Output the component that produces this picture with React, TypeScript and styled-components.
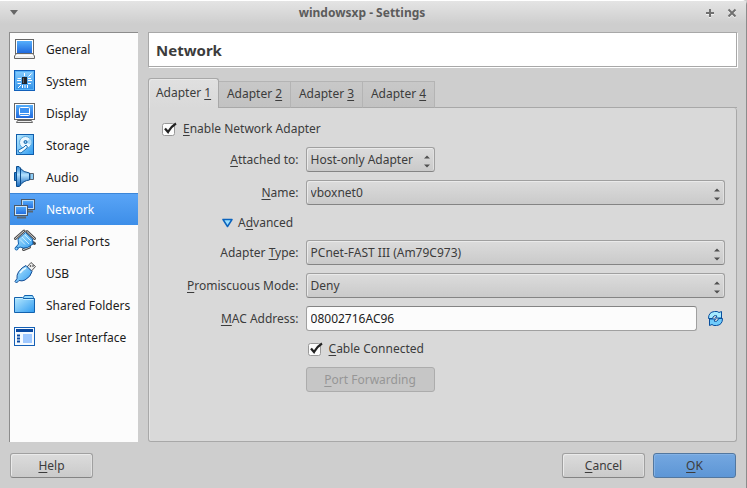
import React from "react";
import styled, { createGlobalStyle, css } from "styled-components";

const GlobalStyle = createGlobalStyle`
  * { box-sizing: border-box; }
  body { margin: 0; background: #cecece; }
  body, button, input, select {
    font-family: "Noto Sans", "Open Sans", sans-serif;
    font-size: 12px;
    color: #3c3c3c;
  }
`;

const Window = styled.div`
  min-height: 100vh;
  display: flex;
  flex-direction: column;
  background: #cecece;
  border-top: 1px solid #fff;
  border-right: 1px solid #8c8c8c;
  border-top-right-radius: 5px;
`;

const TitleBar = styled.header`
  height: 23px;
  flex: none;
  display: grid;
  grid-template-columns: 32px 1fr 54px;
  align-items: center;
  padding: 0 9px;
  background: linear-gradient(#e4e4e4, #cecece);
`;

const Title = styled.h1`
  margin: 0;
  font-size: 12px;
  line-height: 16px;
  font-weight: 700;
  text-align: center;
  color: #5c5c5c;
`;

const TitleActions = styled.div`
  display: flex;
  justify-content: flex-end;
  gap: 12px;
`;

const IconButton = styled.button`
  display: flex;
  padding: 0;
  border: 0;
  background: none;
  svg { display: block; }
`;

const Body = styled.div`
  flex: 1;
  display: grid;
  grid-template-columns: 129px minmax(0, 1fr);
  gap: 10px;
  padding: 8px 9px 0;
`;

const Sidebar = styled.nav`
  background: #fcfcfc;
  border-top: 1px solid #8c8c8c;
  border-left: 1px solid #8c8c8c;
`;

const SideItem = styled.a<{ $active?: boolean }>`
  height: 32px;
  display: flex;
  align-items: center;
  gap: 9px;
  padding-left: 3px;
  color: ${(p) => (p.$active ? "#fff" : "#1c1c1c")};
  text-decoration: none;
  background: ${(p) => (p.$active ? "linear-gradient(#5aa5f7, #3d8ee8)" : "none")};
  box-shadow: ${(p) => (p.$active ? "inset 0 1px 0 #3c86d8" : "none")};
`;

const Main = styled.main`
  display: flex;
  flex-direction: column;
  min-width: 0;
`;

const PageHeading = styled.h2`
  margin: 0 0 11px;
  height: 35px;
  padding: 0 7px;
  font-size: 15px;
  line-height: 34px;
  font-weight: 700;
  color: #3c3c3c;
  background: #fff;
  border: 1px solid #a8a8a8;
  box-shadow: 1px 1px 0 #fff;
`;

const TabBar = styled.div`
  display: flex;
  align-items: flex-end;
  height: 30px;
`;

const Tab = styled.button<{ $active?: boolean }>`
  height: 27px;
  width: 72px;
  padding: 0 0 2px;
  border: 1px solid #b4b4b4;
  border-left-width: 0;
  border-bottom-color: #a8a8a8;
  background: linear-gradient(#c8c8c8, #c2c2c2);
  &:last-child { border-top-right-radius: 3px; }
  ${(p) =>
    p.$active &&
    css`
      height: 30px;
      width: 71px;
      border: 1px solid #a8a8a8;
      border-bottom: 0;
      border-radius: 3px 3px 0 0;
      background: linear-gradient(#e0e0e0, #d9d9d9);
      box-shadow: inset 1px 1px 0 #e8e8e8;
    `}
`;

const Panel = styled.section`
  flex: 1;
  padding: 11px 11px 12px 13px;
  background: #d9d9d9;
  border: 1px solid #a8a8a8;
  border-top: 0;
  border-radius: 0 3px 3px 3px;
  box-shadow: inset 1px 0 0 #e4e4e4;
`;

const TabFill = styled.div`
  flex: 1;
  border-bottom: 1px solid #a8a8a8;
`;

const CheckLabel = styled.label`
  display: flex;
  align-items: center;
  gap: 6px;
  height: 18px;
`;

const CheckBox = styled.input`
  appearance: none;
  width: 15px;
  height: 15px;
  margin: 0;
  background: url("data:image/svg+xml,%3Csvg xmlns='http://www.w3.org/2000/svg' width='15' height='15'%3E%3Crect x='.5' y='2.5' width='12' height='12' rx='2' fill='%23fcfcfc' stroke='%23999'/%3E%3Cpath d='M3 7.5 6 11Q9 5.500 14 2.500' fill='none' stroke='%23222' stroke-width='2.300'/%3E%3C/svg%3E");
`;

const Form = styled.div`
  display: grid;
  grid-template-columns: max-content minmax(0, 1fr);
  column-gap: 7px;
  row-gap: 8px;
  align-items: center;
  margin-top: 10px;
  padding-left: 25px;
`;

const FieldLabel = styled.label`
  text-align: right;
`;

const SelectBox = styled.div<{ $compact?: boolean }>`
  position: relative;
  width: ${(p) => (p.$compact ? "129px" : "100%")};
  svg {
    position: absolute;
    right: 5px;
    top: 8px;
    pointer-events: none;
  }
`;

const raised = css`
  height: 25px;
  border: 1px solid #a0a0a0;
  border-bottom-color: #848484;
  border-radius: 3px;
  background: linear-gradient(#dcdcdc, #cacaca);
  box-shadow: inset 1px 1px 0 #eaeaea, inset -1px 0 0 #e0e0e0;
`;

const Select = styled.select`
  ${raised}
  appearance: none;
  display: block;
  width: 100%;
  padding: 0 18px 0 4px;
`;

const MacRow = styled.div`
  display: flex;
  align-items: center;
  gap: 10px;
  padding-right: 1px;
`;

const TextInput = styled.input`
  flex: 1;
  min-width: 0;
  height: 25px;
  padding: 0 4px;
  color: #1c1c1c;
  background: #fcfcfc;
  border: 1px solid #a0a0a0;
  border-top-color: #848484;
  border-radius: 3px;
`;

const Advanced = styled.button`
  grid-column: 1 / -1;
  justify-self: start;
  display: flex;
  align-items: center;
  gap: 5px;
  height: 19px;
  margin-left: 35px;
  padding: 0;
  border: 0;
  background: none;
`;

const CableRow = styled.div`
  grid-column: 2;
  padding: 0 2px 2px;
`;

const PushButton = styled.button<{ $primary?: boolean }>`
  ${raised}
  width: 83px;
  padding: 0;
  ${(p) =>
    p.$primary &&
    css`
      border-color: #52779f;
      background: linear-gradient(#74a7e0, #5d96d6);
      box-shadow: inset 1px 1px 0 #83b1e5;
    `}
  &:disabled {
    color: #969696;
    background: #c6c6c6;
    border-color: #acacac;
    box-shadow: none;
  }
`;

const ForwardingButton = styled(PushButton)`
  grid-column: 2;
  width: 129px;
`;

const Footer = styled.footer`
  display: flex;
  gap: 8px;
  padding: 11px 10px 10px;
`;

const Spacer = styled.div`
  flex: 1;
`;

const Key = styled.span`
  text-decoration: underline;
  text-decoration-thickness: 1px;
  text-underline-offset: 2px;
  text-decoration-skip-ink: none;
`;

function Mnemonic({ text, at = 0 }: { text: string; at?: number }) {
  return (
    <span>
      {text.slice(0, at)}
      <Key>{text[at]}</Key>
      {text.slice(at + 1)}
    </span>
  );
}

const icons: Record<string, React.ReactNode> = {
  General: (
    <>
      <rect x="2.500" y="2.500" width="18" height="14" fill="#fff" stroke="#666" />
      <rect x="4" y="4" width="15" height="12" fill="url(#screen)" />
      <path d="M3.500 16.500h16l2 2.500v2.500h-20V19z" fill="#eee" stroke="#666" />
      <path d="M3 18.500h17" stroke="#fff" />
    </>
  ),
  System: (
    <>
      <rect x="1.500" y="1.500" width="20" height="20" fill="url(#sky)" stroke="#1260ba" />
      <rect x="2.500" y="2.500" width="18" height="18" fill="none" stroke="#59b3f7" />
      <path d="M11.500 4v3M15.500 7.500l3-3M4.500 9.500H8M4 11.500h4M4.500 14.500H8M15 9.500h3M15 11.500h4M15 14.500h3M9.500 16v3M12 16v3M14.500 16v3M5 19l3-3" stroke="#fff" />
      <rect x="9" y="8" width="5" height="7" fill="#20252c" />
      <path d="M10.500 9v5" stroke="#59636e" />
    </>
  ),
  Display: (
    <>
      <path d="M4.500 19.500h14l1 2h-16z" fill="#eee" stroke="#666" />
      <rect x="1.500" y="2.500" width="20" height="16" fill="#fff" stroke="#666" />
      <rect x="3" y="4" width="17" height="13" fill="url(#screen)" />
      <rect x="6.500" y="6.500" width="10" height="8" rx="1" fill="#3c91f2" stroke="#fff" />
      <path d="M7 12.500h9" stroke="#fff" />
    </>
  ),
  Storage: (
    <>
      <rect x="3.500" y="1.500" width="17" height="20" fill="url(#pale)" stroke="#105dab" />
      <circle cx="12.500" cy="9.500" r="6" fill="#e9f7ff" stroke="#5fa9dc" />
      <path d="M12.500 9.500L17 5.500a6 6 0 0 1 1 6z" fill="#a9dbfa" />
      <circle cx="12.500" cy="9" r="1.500" fill="#80c4f2" stroke="#1261a6" />
      <path d="M5 17.500l6-3.500 2-2 1.500 2-1.500 2-5 4q-3 0-3-2.500z" fill="#eefaff" stroke="#186eb7" />
      <path d="M16 18.500h3" stroke="#41a7eb" />
    </>
  ),
  Audio: (
    <>
      <path d="M17 8.500h3.500v6H17z" fill="#8bcdf8" stroke="#5b6470" />
      <path d="M7 3Q10.500 7.500 16.500 8v7Q10.500 15.500 7 20.500z" fill="url(#cone)" stroke="#0c4d8d" />
      <path d="M3.500 1.500H6L7.500 3v17.500l-1.500 1H3.500z" fill="url(#cone)" stroke="#0c4d8d" />
      <path d="M1.500 7.500h2v8h-2z" fill="#2a86d8" stroke="#0c4d8d" />
    </>
  ),
  Network: (
    <>
      <path d="M14 14.500h6" stroke="#5a6672" strokeWidth="2" />
      <rect x="8.500" y="2.500" width="13" height="10" fill="url(#sky)" stroke="#4d5966" />
      <rect x="9.500" y="3.500" width="11" height="8" fill="url(#screen)" stroke="#b9dcfa" />
      <path d="M4 20.500h9" stroke="#5a6672" strokeWidth="2" />
      <rect x="1.500" y="8.500" width="13" height="10" fill="url(#sky)" stroke="#4d5966" />
      <rect x="2.500" y="9.500" width="11" height="8" fill="url(#screen)" stroke="#cde6fb" />
    </>
  ),
  "Serial Ports": (
    <>
      <path d="M14 2.500l7.500 7M10.500 20.500l6-2.500M20 13.500l1.500 1" stroke="#4c4c4c" strokeWidth="3" strokeLinecap="round" />
      <path d="M14 2.500l7.500 7M10.500 20.500l6-2.500" stroke="#ddd" strokeLinecap="round" />
      <path d="M5 10l7.500-6.500 7 6.500.500 5-5.500 3.500-4 .500L7 18l-3 2-1.500-1.500 3-3.500z" fill="url(#pale)" stroke="#1260ac" />
      <path d="M9 8l7 7M7 10.500l5 5M12 6l6 6" stroke="#c8edff" />
      <circle cx="3.500" cy="19.500" r="1.500" fill="#8bd0fb" stroke="#1260ac" />
      <path d="M2.500 9.500l8.500-7.500" stroke="#4c4c4c" strokeWidth="3" strokeLinecap="round" />
      <path d="M2.500 9.500l8.500-7.500" stroke="#ddd" strokeLinecap="round" />
    </>
  ),
  USB: (
    <>
      <path d="M14 6l4-4.500 4.500 4L18.500 10z" fill="#eee" stroke="#555" />
      <path d="M17 4.500l1 1M19.500 4.500l1 1" stroke="#444" strokeWidth="1.500" />
      <path d="M13 4.500l6 6q-1 5-7 8.500-3 1.500-6 .500L3.500 22 2 20.500l2-3Q3.500 14 5.500 11 9 6 13 4.500z" fill="url(#pale)" stroke="#174d94" />
      <path d="M7 12q3-4 6-5" stroke="#eaf9ff" strokeWidth="1.500" fill="none" />
    </>
  ),
  "Shared Folders": (
    <>
      <path d="M10.500 4.500l1-2h8l1 2v3h-10z" fill="#98dcff" stroke="#1261ad" />
      <path d="M1.500 4.500h8l1 1h11v14h-20z" fill="url(#pale)" stroke="#1261ad" />
      <path d="M2.500 5.500h7l1 1h10" fill="none" stroke="#c7efff" />
    </>
  ),
  "User Interface": (
    <>
      <rect x="1.500" y="2.500" width="20" height="18" fill="#f5faff" stroke="#145fb5" />
      <path d="M3 5.500h17" stroke="#0948a0" strokeWidth="3" />
      <rect x="10" y="9" width="9" height="9" fill="#9fc8ff" />
      <path d="M4 10.500h3M4 13.500h3M4 16.500h3" stroke="#0948a0" strokeWidth="2" />
    </>
  ),
};

function Gradients() {
  return (
    <defs>
      <linearGradient id="screen" x2="0" y2="1">
        <stop stopColor="#56aefb" />
        <stop offset="1" stopColor="#1f69de" />
      </linearGradient>
      <linearGradient id="sky" x2="0" y2="1">
        <stop stopColor="#8bcfff" />
        <stop offset="1" stopColor="#2d8fe8" />
      </linearGradient>
      <linearGradient id="pale" x2="1" y2="1">
        <stop stopColor="#b9eaff" />
        <stop offset="1" stopColor="#2f9bf0" />
      </linearGradient>
      <linearGradient id="cone" x2="0" y2="1">
        <stop stopColor="#2c86d6" />
        <stop offset="0.400" stopColor="#b5e2ff" />
        <stop offset="1" stopColor="#1567bd" />
      </linearGradient>
    </defs>
  );
}

function Combo({ id, value, compact }: { id: string; value: string; compact?: boolean }) {
  return (
    <SelectBox $compact={compact}>
      <Select id={id} defaultValue={value}>
        <option>{value}</option>
      </Select>
      <svg width="6" height="13" viewBox="0 0 6 13" fill="#505050">
        <path d="M0 3.500L3 .500l3 3zM0 9.500l3 3 3-3z" />
      </svg>
    </SelectBox>
  );
}

export default function App() {
  return (
    <>
      <GlobalStyle />
      <Window>
        <TitleBar>
          <IconButton aria-label="Window menu">
            <svg width="10" height="6" viewBox="0 0 10 6">
              <path d="M1 0h8L5 5z" fill="#666" />
            </svg>
          </IconButton>
          <Title>windowsxp - Settings</Title>
          <TitleActions>
            <IconButton aria-label="Maximize">
              <svg width="10" height="10" viewBox="0 0 10 10">
                <path d="M5 2v8M1 6h8" stroke="#f4f4f4" strokeWidth="2" />
                <path d="M5 1v8M1 5h8" stroke="#707070" strokeWidth="2" />
              </svg>
            </IconButton>
            <IconButton aria-label="Close">
              <svg width="10" height="10" viewBox="0 0 10 10">
                <path d="M1.500 2.500l7 7M8.500 2.500l-7 7" stroke="#f4f4f4" strokeWidth="2" />
                <path d="M1.500 1.500l7 7M8.500 1.500l-7 7" stroke="#707070" strokeWidth="2" />
              </svg>
            </IconButton>
          </TitleActions>
        </TitleBar>
        <Body>
          <Sidebar>
            {Object.entries(icons).map(([name, drawing]) => (
              <SideItem key={name} href="#" $active={name === "Network"}>
                <svg width="24" height="24" viewBox="0 0 24 24" aria-hidden="true">
                  <Gradients />
                  {drawing}
                </svg>
                {name}
              </SideItem>
            ))}
          </Sidebar>
          <Main>
            <PageHeading>Network</PageHeading>
            <TabBar role="tablist">
              {[1, 2, 3, 4].map((n) => (
                <Tab key={n} role="tab" aria-selected={n === 1} $active={n === 1}>
                  <Mnemonic text={`Adapter ${n}`} at={8} />
                </Tab>
              ))}
              <TabFill role="presentation" />
            </TabBar>
            <Panel>
              <CheckLabel>
                <CheckBox type="checkbox" defaultChecked />
                <Mnemonic text="Enable Network Adapter" />
              </CheckLabel>
              <Form>
                <FieldLabel htmlFor="attached"><Mnemonic text="Attached to:" /></FieldLabel>
                <Combo id="attached" value="Host-only Adapter" compact />
                <FieldLabel htmlFor="name"><Mnemonic text="Name:" /></FieldLabel>
                <Combo id="name" value="vboxnet0" />
                <Advanced aria-expanded="true">
                  <svg width="11" height="10" viewBox="0 0 11 10">
                    <path d="M1 1.500h9L5.500 8.500z" fill="#9ce0ff" stroke="#0b63bd" strokeWidth="1.500" strokeLinejoin="round" />
                  </svg>
                  <Mnemonic text="Advanced" at={1} />
                </Advanced>
                <FieldLabel htmlFor="type"><Mnemonic text="Adapter Type:" at={8} /></FieldLabel>
                <Combo id="type" value="PCnet-FAST III (Am79C973)" />
                <FieldLabel htmlFor="mode"><Mnemonic text="Promiscuous Mode:" /></FieldLabel>
                <Combo id="mode" value="Deny" />
                <FieldLabel htmlFor="mac"><Mnemonic text="MAC Address:" /></FieldLabel>
                <MacRow>
                  <TextInput id="mac" defaultValue="08002716AC96" />
                  <IconButton aria-label="Generate a new MAC address">
                    <svg width="17" height="17" viewBox="0 0 17 17" strokeLinejoin="round">
                      <path d="M1.500 8.500Q1.500 2 7.500 1.500q3-.500 4.500 1l2.500-1V8H8.500l1.500-2Q6.500 4.500 5.500 8.500z" fill="#a6ebff" stroke="#084e9e" />
                      <path d="M15.500 8.500q0 6.500-6 7-3 .500-4.500-1l-2.500 1V9h6L7 11q3.500 1.500 4.500-2.500z" fill="#6fcbfb" stroke="#084e9e" />
                    </svg>
                  </IconButton>
                </MacRow>
                <CableRow>
                  <CheckLabel>
                    <CheckBox type="checkbox" defaultChecked />
                    <Mnemonic text="Cable Connected" />
                  </CheckLabel>
                </CableRow>
                <ForwardingButton disabled>
                  <Mnemonic text="Port Forwarding" />
                </ForwardingButton>
              </Form>
            </Panel>
          </Main>
        </Body>
        <Footer>
          <PushButton><Mnemonic text="Help" /></PushButton>
          <Spacer />
          <PushButton><Mnemonic text="Cancel" /></PushButton>
          <PushButton $primary><Mnemonic text="OK" /></PushButton>
        </Footer>
      </Window>
    </>
  );
}
